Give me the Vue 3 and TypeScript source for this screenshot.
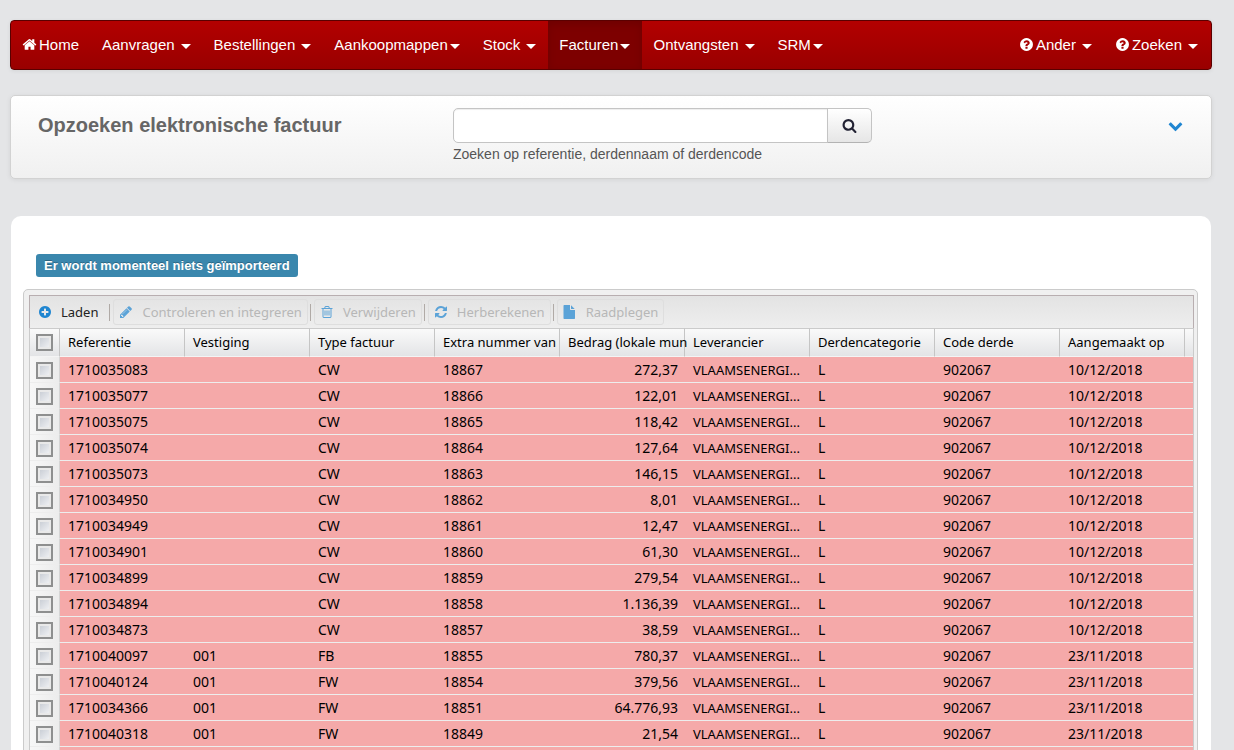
<script setup lang="ts">
import { ref } from 'vue'

interface MenuItem {
  label: string
  icon?: string
  caret: 'none' | 'near' | 'far'
  active?: boolean
}
interface Tool {
  label: string
  icon: string
  disabled: boolean
}
interface Row {
  ref: string
  site: string
  type: string
  extra: string
  amount: string
  date: string
}

const icons: Record<string, string> = {
  home: 'M1472 992v480q0 26-19 45t-45 19h-384v-384h-256v384h-384q-26 0-45-19t-19-45v-480q0-1 .5-3t.5-3l575-474 575 474q1 2 1 6zm223-69l-62 74q-8 9-21 11h-3q-13 0-21-7l-692-577-692 577q-12 8-24 7-13-2-21-11l-62-74q-8-10-7-23.5t11-21.5l719-599q32-26 76-26t76 26l244 204v-195q0-14 9-23t23-9h192q14 0 23 9t9 23v408l219 182q10 8 11 21.5t-7 23.5z',
  question: 'M1024 1376v-192q0-14-9-23t-23-9h-192q-14 0-23 9t-9 23v192q0 14 9 23t23 9h192q14 0 23-9t9-23zm256-672q0-88-55.5-163t-138.5-116-170-41q-243 0-371 213-15 24 8 42l132 100q7 6 19 6 16 0 25-12 53-68 86-92 34-24 86-24 48 0 85.5 26t37.5 59q0 38-20 61t-68 45q-63 28-115.5 86.5t-52.5 125.5v36q0 14 9 23t23 9h192q14 0 23-9t9-23q0-19 21.5-49.5t54.5-49.5q32-18 49-28.5t46-35 44.5-48 28-60.5 12.5-81zm384 192q0 209-103 385.5t-279.5 279.5-385.5 103-385.5-103-279.5-279.5-103-385.5 103-385.5 279.5-279.5 385.5-103 385.5 103 279.5 279.5 103 385.5z',
  search: 'M1216 832q0-185-131.5-316.5t-316.5-131.5-316.5 131.5-131.5 316.5 131.5 316.5 316.5 131.5 316.5-131.5 131.5-316.5zm512 832q0 52-38 90t-90 38q-54 0-90-38l-343-342q-179 124-399 124-143 0-273.5-55.5t-225-150-150-225-55.5-273.5 55.5-273.5 150-225 225-150 273.5-55.5 273.5 55.5 225 150 150 225 55.5 273.5q0 220-124 399l343 343q37 37 37 90z',
  down: 'M1683 808l-742 741q-19 19-45 19t-45-19l-742-741q-19-19-19-45.5t19-45.5l166-165q19-19 45-19t45 19l531 531 531-531q19-19 45-19t45 19l166 165q19 19 19 45.5t-19 45.5z',
  plus: 'M1344 960v-128q0-26-19-45t-45-19h-256v-256q0-26-19-45t-45-19h-128q-26 0-45 19t-19 45v256h-256q-26 0-45 19t-19 45v128q0 26 19 45t45 19h256v256q0 26 19 45t45 19h128q26 0 45-19t19-45v-256h256q26 0 45-19t19-45zm320-64q0 209-103 385.5t-279.5 279.5-385.5 103-385.5-103-279.5-279.5-103-385.5 103-385.5 279.5-279.5 385.5-103 385.5 103 279.5 279.5 103 385.5z',
  pencil: 'M491 1536l91-91-235-235-91 91v107h128v128h107zm523-928q0-22-22-22-10 0-17 7l-542 542q-7 7-7 17 0 22 22 22 10 0 17-7l542-542q7-7 7-17zm-54-192l416 416-832 832h-416v-416zm683 96q0 53-37 90l-166 166-416-416 166-165q36-38 90-38 53 0 91 38l235 234q37 39 37 91z',
  trash: 'M704 736v576q0 14-9 23t-23 9h-64q-14 0-23-9t-9-23v-576q0-14 9-23t23-9h64q14 0 23 9t9 23zm256 0v576q0 14-9 23t-23 9h-64q-14 0-23-9t-9-23v-576q0-14 9-23t23-9h64q14 0 23 9t9 23zm256 0v576q0 14-9 23t-23 9h-64q-14 0-23-9t-9-23v-576q0-14 9-23t23-9h64q14 0 23 9t9 23zm128 724v-948h-896v948q0 22 7 40.5t14.5 27 10.5 8.5h832q3 0 10.5-8.5t14.5-27 7-40.5zm-672-1076h448l-48-117q-7-9-17-11h-317q-10 2-17 11zm928 32v64q0 14-9 23t-23 9h-96v948q0 83-47 143.5t-113 60.5h-832q-66 0-113-58.5t-47-141.5v-952h-96q-14 0-23-9t-9-23v-64q0-14 9-23t23-9h309l70-167q15-37 54-63t79-26h320q40 0 79 26t54 63l70 167h309q14 0 23 9t9 23z',
  refresh: 'M1639 1056q0 5-1 7-64 268-268 434.5t-478 166.5q-146 0-282.5-55t-243.5-157l-129 129q-19 19-45 19t-45-19-19-45v-448q0-26 19-45t45-19h448q26 0 45 19t19 45-19 45l-137 137q71 66 161 102t187 36q134 0 250-65t186-179q11-17 53-117 8-23 30-23h192q13 0 22.5 9.5t9.5 22.5zm25-800v448q0 26-19 45t-45 19h-448q-26 0-45-19t-19-45 19-45l138-138q-148-137-349-137-134 0-250 65t-186 179q-11 17-53 117-8 23-30 23h-199q-13 0-22.5-9.5t-9.5-22.5v-7q65-268 270-434.5t480-166.5q146 0 284 55.5t245 156.5l130-129q19-19 45-19t45 19 19 45z',
  file: 'M1024 512v-472q22 14 36 28l408 408q14 14 28 36h-472zm-128 32q0 40 28 68t68 28h544v1056q0 40-28 68t-68 28h-1280q-40 0-68-28t-28-68v-1600q0-40 28-68t68-28h736v544z'
}

const leftMenu: MenuItem[] = [
  { label: 'Home', icon: 'home', caret: 'none' },
  { label: 'Aanvragen', caret: 'far' },
  { label: 'Bestellingen', caret: 'far' },
  { label: 'Aankoopmappen', caret: 'near' },
  { label: 'Stock', caret: 'far' },
  { label: 'Facturen', caret: 'near', active: true },
  { label: 'Ontvangsten', caret: 'far' },
  { label: 'SRM', caret: 'near' }
]
const rightMenu: MenuItem[] = [
  { label: 'Ander', icon: 'question', caret: 'far' },
  { label: 'Zoeken', icon: 'question', caret: 'far' }
]
const tools: Tool[] = [
  { label: 'Laden', icon: 'plus', disabled: false },
  { label: 'Controleren en integreren', icon: 'pencil', disabled: true },
  { label: 'Verwijderen', icon: 'trash', disabled: true },
  { label: 'Herberekenen', icon: 'refresh', disabled: true },
  { label: 'Raadplegen', icon: 'file', disabled: true }
]
const columns = [
  'Referentie', 'Vestiging', 'Type factuur', 'Extra nummer van', 'Bedrag (lokale mun',
  'Leverancier', 'Derdencategorie', 'Code derde', 'Aangemaakt op'
]

const row = (ref: string, site: string, type: string, extra: string, amount: string, date: string): Row =>
  ({ ref, site, type, extra, amount, date })

const rows: Row[] = [
  row('1710035083', '', 'CW', '18867', '272,37', '10/12/2018'),
  row('1710035077', '', 'CW', '18866', '122,01', '10/12/2018'),
  row('1710035075', '', 'CW', '18865', '118,42', '10/12/2018'),
  row('1710035074', '', 'CW', '18864', '127,64', '10/12/2018'),
  row('1710035073', '', 'CW', '18863', '146,15', '10/12/2018'),
  row('1710034950', '', 'CW', '18862', '8,01', '10/12/2018'),
  row('1710034949', '', 'CW', '18861', '12,47', '10/12/2018'),
  row('1710034901', '', 'CW', '18860', '61,30', '10/12/2018'),
  row('1710034899', '', 'CW', '18859', '279,54', '10/12/2018'),
  row('1710034894', '', 'CW', '18858', '1.136,39', '10/12/2018'),
  row('1710034873', '', 'CW', '18857', '38,59', '10/12/2018'),
  row('1710040097', '001', 'FB', '18855', '780,37', '23/11/2018'),
  row('1710040124', '001', 'FW', '18854', '379,56', '23/11/2018'),
  row('1710034366', '001', 'FW', '18851', '64.776,93', '23/11/2018'),
  row('1710040318', '001', 'FW', '18849', '21,54', '23/11/2018')
]

const query = ref('')
const selected = ref<string[]>([])
const toggleAll = (e: Event) => {
  selected.value = (e.target as HTMLInputElement).checked ? rows.map(r => r.ref) : []
}
</script>

<template>
  <div class="page">
    <nav class="navbar">
      <ul v-for="(menu, i) in [leftMenu, rightMenu]" :key="i" class="menu">
        <li v-for="item in menu" :key="item.label">
          <a href="#" class="menu-link" :class="{ active: item.active }">
            <svg v-if="item.icon" class="menu-icon" viewBox="0 0 1792 1792" aria-hidden="true"><path :d="icons[item.icon]" /></svg>
            <span>{{ item.label }}</span>
            <i v-if="item.caret !== 'none'" class="caret" :class="item.caret"></i>
          </a>
        </li>
      </ul>
    </nav>

    <header class="search-panel">
      <h1>Opzoeken elektronische factuur</h1>
      <form class="search" @submit.prevent>
        <div class="search-group">
          <input id="query" v-model="query" type="text" class="search-input">
          <button type="submit" class="search-button" aria-label="Zoeken">
            <svg viewBox="0 0 1792 1792" aria-hidden="true"><path :d="icons.search" /></svg>
          </button>
        </div>
        <label for="query">Zoeken op referentie, derdennaam of derdencode</label>
      </form>
      <button type="button" class="expand" aria-label="Uitklappen">
        <svg viewBox="0 0 1792 1792" aria-hidden="true"><path :d="icons.down" /></svg>
      </button>
    </header>

    <main class="content">
      <span class="badge">Er wordt momenteel niets geïmporteerd</span>
      <section class="grid">
        <div class="toolbar">
          <template v-for="(tool, i) in tools" :key="tool.label">
            <span v-if="i > 0" class="separator"></span>
            <button type="button" class="tool" :disabled="tool.disabled">
              <svg viewBox="0 0 1792 1792" aria-hidden="true"><path :d="icons[tool.icon]" /></svg>
              <span>{{ tool.label }}</span>
            </button>
          </template>
        </div>
        <table>
          <colgroup>
            <col class="col-check">
            <col v-for="c in columns" :key="c" class="col-data">
            <col>
          </colgroup>
          <thead>
            <tr>
              <th class="check"><input type="checkbox" aria-label="Alles selecteren" @change="toggleAll"></th>
              <th v-for="c in columns" :key="c" scope="col">{{ c }}</th>
              <th class="filler"></th>
            </tr>
          </thead>
          <tbody>
            <tr v-for="r in rows" :key="r.ref">
              <td class="check"><input v-model="selected" type="checkbox" :value="r.ref" :aria-label="r.ref"></td>
              <td>{{ r.ref }}</td>
              <td>{{ r.site }}</td>
              <td>{{ r.type }}</td>
              <td>{{ r.extra }}</td>
              <td class="amount">{{ r.amount }}</td>
              <td class="supplier">VLAAMSENERGI...</td>
              <td>L</td>
              <td>902067</td>
              <td>{{ r.date }}</td>
              <td></td>
            </tr>
            <tr>
              <td class="check"></td>
              <td colspan="10"></td>
            </tr>
          </tbody>
        </table>
      </section>
    </main>
  </div>
</template>

<style>
body {
  margin: 0;
  background: #e4e5e7;
}
</style>

<style scoped>
.page {
  box-sizing: border-box;
  height: 100vh;
  overflow: hidden;
  padding: 20px 22px 0 10px;
  background: #e4e5e7;
  font-family: "Liberation Sans", Arial, sans-serif;
  font-size: 14px;
  color: #555;
}
svg {
  display: block;
  flex: none;
  fill: currentColor;
}
.navbar {
  display: flex;
  justify-content: space-between;
  padding: 0 1px 0 0;
  border: 1px solid #5a0000;
  border-radius: 4px;
  background: linear-gradient(#b30000, #990000);
  box-shadow: 0 1px 4px rgba(0, 0, 0, 0.07);
}
.menu {
  display: flex;
  margin: 0;
  padding: 0;
  list-style: none;
}
.menu-link {
  display: flex;
  align-items: center;
  box-sizing: border-box;
  height: 48px;
  padding: 0 12px 2px 11px;
  color: #fff;
  font-size: 15px;
  text-decoration: none;
}
.menu-link.active {
  background: #7d0000;
  box-shadow: inset 0 3px 8px rgba(0, 0, 0, 0.125);
}
.menu-icon {
  width: 15px;
  height: 15px;
  margin-right: 2px;
}
.caret {
  margin: 4px 0 0 2px;
  border: 5px solid transparent;
  border-top-color: #fff;
  border-bottom: 0;
}
.caret.far {
  margin-left: 6px;
}
.search-panel {
  display: flex;
  align-items: flex-start;
  box-sizing: border-box;
  min-height: 84px;
  margin-top: 25px;
  padding: 12px 28px 12px 27px;
  border: 1px solid #d2d2d2;
  border-radius: 5px;
  background: linear-gradient(#fff, #f0f0f0);
  box-shadow: 0 1px 5px rgba(0, 0, 0, 0.07);
}
h1 {
  width: 415px;
  margin: 5px 0 0;
  color: #666;
  font-size: 20px;
  line-height: 24px;
}
.search-group {
  display: flex;
  width: 419px;
  height: 35px;
}
.search-input {
  flex: 1;
  min-width: 0;
  box-sizing: border-box;
  padding: 4px 8px;
  border: 1px solid #c4c4c4;
  border-radius: 5px 0 0 5px;
  background: #fff;
  box-shadow: inset 0 1px 1px rgba(0, 0, 0, 0.075);
  font: inherit;
}
.search-button {
  display: flex;
  align-items: center;
  justify-content: center;
  width: 45px;
  margin-left: -1px;
  padding: 0;
  border: 1px solid #c4c4c4;
  border-bottom-color: #b3b3b3;
  border-radius: 0 5px 5px 0;
  background: linear-gradient(#fff, #e6e6e6);
  color: #222233;
}
.search-button svg {
  width: 15px;
  height: 15px;
}
.search label {
  display: block;
  margin-top: 2px;
  line-height: 18px;
}
.expand {
  margin: 10px 0 0 auto;
  padding: 0;
  border: 0;
  background: none;
  color: #2086d1;
}
.expand svg {
  width: 15px;
  height: 15px;
}
.content {
  margin: 37px 1px 0 1px;
  padding: 38px 13px 0 12px;
  border-radius: 10px;
  background: #fff;
}
.badge {
  display: block;
  width: max-content;
  margin-left: 13px;
  padding: 0 8px;
  border-radius: 3px;
  background: #3a87ad;
  color: #fff;
  font-size: 13px;
  font-weight: bold;
  line-height: 23px;
  text-shadow: 0 -1px 0 rgba(0, 0, 0, 0.25);
}
.grid {
  margin-top: 12px;
  padding: 5px 3px 0 5px;
  border: 1px solid #cbcbcb;
  border-radius: 5px 5px 0 0;
  background: #f0f0f0;
  color: #000;
  font-family: "Noto Sans", "Open Sans", sans-serif;
}
.toolbar {
  display: flex;
  align-items: center;
  height: 32px;
  border: 1px solid #b8aeb0;
  border-bottom: 0;
  background: linear-gradient(#e3e3e3, #eee);
}
.separator {
  width: 1px;
  height: 17px;
  margin: 0 3px 0 2px;
  background: #b0aaa6;
}
.tool {
  display: flex;
  align-items: center;
  gap: 9px;
  height: 26px;
  padding: 0 5px;
  border: 1px solid transparent;
  border-radius: 3px;
  background: none;
  color: #222;
  font-family: inherit;
  font-size: 13px;
}
.tool:first-child {
  padding: 0 8px 0 7px;
}
.tool:disabled {
  border-color: #dedede;
  color: #b7b7b7;
}
.tool svg {
  width: 14px;
  height: 14px;
  fill: #2086d1;
}
.tool:disabled svg {
  opacity: 0.7;
}
table {
  width: 100%;
  border-collapse: separate;
  border-spacing: 0;
  table-layout: fixed;
  border: solid #cbcbcb;
  border-width: 0 1px;
}
.col-check {
  width: 30px;
}
.col-data {
  width: 125px;
}
th,
td {
  box-sizing: border-box;
  padding: 0 0 0 8px;
  text-align: left;
  white-space: nowrap;
}
th {
  height: 29px;
  padding-bottom: 2px;
  border-top: 1px solid #cbcbcb;
  border-right: 1px solid #c5c5c5;
  border-bottom: 1px solid #f4f4f4;
  background: linear-gradient(#fafafa, #e3e4e6);
  font-size: 13px;
  font-weight: normal;
}
.filler {
  border-right: 0;
}
td {
  height: 26px;
  border-bottom: 1px solid #ededed;
  background: #f5a9a9;
  font-size: 14px;
  line-height: 24px;
}
.supplier {
  font-size: 13px;
}
.amount {
  padding-right: 7px;
  text-align: right;
}
.check {
  padding: 0 0 0 6px;
}
td.check {
  padding-top: 1px;
  border-right: 1px solid #d5d5d5;
  background: linear-gradient(90deg, #f7f7f7, #ececec);
}
.check input {
  display: block;
  appearance: none;
  box-sizing: border-box;
  width: 17px;
  height: 17px;
  margin: 0;
  border: 2px solid #8e8f8f;
  background: linear-gradient(135deg, #c3c8d0, #f5f6f8);
  box-shadow: inset 0 0 0 2px #e9e9e9;
}
.check input:checked {
  background: #2086d1;
}
</style>
